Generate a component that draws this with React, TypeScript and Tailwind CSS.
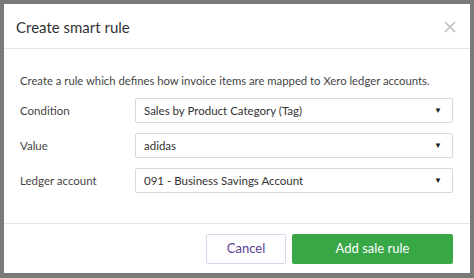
export default function App() {
  const rows = [
    { label: 'Condition', value: 'Sales by Product Category (Tag)' },
    { label: 'Value', value: 'adidas' },
    { label: 'Ledger account', value: '091 - Business Savings Account' },
  ]

  return (
    <div className="w-[474px] h-[278px] bg-[#7a7a7a] pt-[4px] pl-[4px] pr-[4px] pb-[5px] font-['Lato',sans-serif]">
      <div className="w-[466px] h-[269px] bg-white flex flex-col">
        {/* Header */}
        <div className="h-[45px] flex items-center justify-between pl-[12px] pr-[14px] pt-[2px] border-b border-[#e6e6e6]">
          <h2 className="text-[15px] text-[#333]">Create smart rule</h2>
          <svg width="12" height="12" viewBox="0 0 12 12" className="text-[#bdbdbd]">
            <path d="M1 1L11 11M11 1L1 11" stroke="currentColor" strokeWidth="1.6" />
          </svg>
        </div>

        {/* Body */}
        <div className="flex-1 pl-[16px] pr-[17px] pt-[24px]">
          <p className="text-[11.3px] text-[#444] mb-[8px]">
            Create a rule which defines how invoice items are mapped to Xero ledger accounts.
          </p>
          <div className="flex flex-col gap-[10px]">
            {rows.map((r) => (
              <div key={r.label} className="flex items-center">
                <span className="w-[115px] text-[11.5px] text-[#444]">{r.label}</span>
                <div className="flex-1 h-[25px] border border-[#d9d9d9] rounded-[2px] flex items-center justify-between pl-[8px] pr-[10px]">
                  <span className="text-[11.5px] text-[#333]">{r.value}</span>
                  <span className="text-[8px] text-[#222]">▼</span>
                </div>
              </div>
            ))}
          </div>
        </div>

        {/* Footer */}
        <div className="h-[50px] border-t border-[#e6e6e6] flex items-center justify-end gap-[6px] pr-[17px]">
          <button className="w-[80px] h-[30px] border border-[#ddd3ea] rounded-[2px] text-[13px] text-[#5a3f91]">
            Cancel
          </button>
          <button className="w-[161px] h-[30px] bg-[#38a746] rounded-[2px] text-[13px] text-white">
            Add sale rule
          </button>
        </div>
      </div>
    </div>
  )
}
